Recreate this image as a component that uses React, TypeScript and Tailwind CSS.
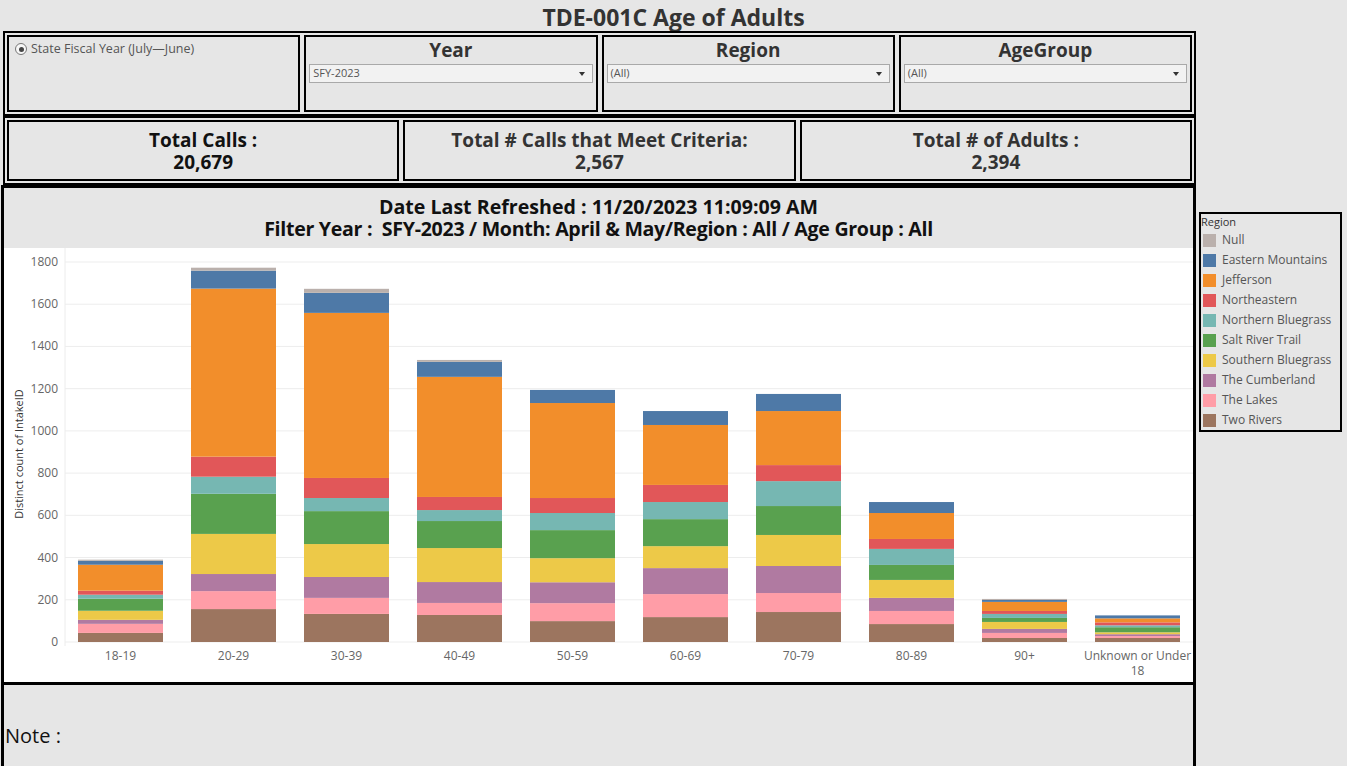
import React from 'react';

// Region legend order (top to bottom); bars stack in reverse order
const REGIONS = [
  { name: 'Null', color: '#bab0ac' },
  { name: 'Eastern Mountains', color: '#4e79a7' },
  { name: 'Jefferson', color: '#f28e2b' },
  { name: 'Northeastern', color: '#e15759' },
  { name: 'Northern Bluegrass', color: '#76b7b2' },
  { name: 'Salt River Trail', color: '#59a14f' },
  { name: 'Southern Bluegrass', color: '#edc948' },
  { name: 'The Cumberland', color: '#b07aa1' },
  { name: 'The Lakes', color: '#ff9da7' },
  { name: 'Two Rivers', color: '#9c755f' },
];

// counts per age group, bottom-up: Two Rivers .. Null
const AGE_GROUPS: { label: string[]; values: number[] }[] = [
  { label: ['18-19'], values: [43, 43, 19, 43, 57, 19, 19, 123, 19, 5] },
  { label: ['20-29'], values: [156, 85, 81, 190, 190, 81, 95, 796, 85, 14] },
  { label: ['30-39'], values: [133, 76, 99, 156, 156, 62, 95, 782, 95, 19] },
  { label: ['40-49'], values: [128, 57, 99, 161, 128, 52, 62, 569, 71, 9] },
  { label: ['50-59'], values: [99, 85, 99, 114, 133, 81, 71, 450, 62, 0] },
  { label: ['60-69'], values: [118, 109, 123, 104, 128, 81, 81, 284, 66, 0] },
  { label: ['70-79'], values: [142, 90, 128, 147, 137, 118, 76, 256, 81, 0] },
  { label: ['80-89'], values: [85, 62, 62, 85, 71, 76, 47, 123, 52, 0] },
  { label: ['90+'], values: [19, 24, 19, 33, 19, 19, 14, 43, 9, 5] },
  { label: ['Unknown or Under', '18'], values: [19, 9, 9, 9, 24, 9, 14, 19, 14, 0] },
];

const STACK_COLORS = [...REGIONS].reverse().map((r) => r.color);
const TICKS = [0, 200, 400, 600, 800, 1000, 1200, 1400, 1600, 1800];

const BASE_Y = 394;
const K = 380 / 1800;
const PLOT_X = 61;
const STEP = 113;
const BAR_W = 85;

function Dropdown({ value }: { value: string }) {
  return (
    <div className="mx-[3px] mt-[1px] flex h-[19px] items-center justify-between border border-[#a9a9a9] bg-[#f2f2f2] pl-[3px] pr-[7px] text-[11px] text-[#555]">
      <span>{value}</span>
      <svg width="6" height="4" viewBox="0 0 6 4">
        <path d="M0 0h6L3 4z" fill="#333" />
      </svg>
    </div>
  );
}

function FilterPanel({ title, value }: { title: string; value: string }) {
  return (
    <div className="border-2 border-black">
      <div className="h-[26px] text-center text-[19px] font-bold leading-[26px] text-[#333]">{title}</div>
      <Dropdown value={value} />
    </div>
  );
}

function Kpi({ title, value, dark }: { title: string; value: string; dark?: boolean }) {
  return (
    <div
      className={`flex flex-col items-center justify-center border-2 border-black text-[19px] font-bold leading-[22px] ${dark ? 'text-[#111]' : 'text-[#333]'}`}
    >
      <div>{title}</div>
      <div>{value}</div>
    </div>
  );
}

function Chart() {
  return (
    <svg width="1189" height="434" viewBox="0 0 1189 434" className="block">
      <line x1={PLOT_X} y1={0} x2={PLOT_X} y2={BASE_Y + 4} stroke="#ececec" />
      {TICKS.map((t) => {
        const y = BASE_Y - t * K;
        return (
          <g key={t}>
            <line x1={PLOT_X} y1={y} x2={1189} y2={y} stroke="#ededed" />
            <text x={54} y={y + 4} textAnchor="end" fontSize="12" fill="#666" fontFamily="Open Sans, sans-serif">
              {t}
            </text>
          </g>
        );
      })}
      <text
        transform="translate(19 206) rotate(-90)"
        textAnchor="middle"
        fontSize="11"
        fill="#333"
        fontFamily="Open Sans, sans-serif"
      >
        Distinct count of IntakeID
      </text>
      {AGE_GROUPS.map((g, i) => {
        const x = 74 + STEP * i;
        let cum = 0;
        return (
          <g key={g.label.join(' ')}>
            {g.values.map((v, j) => {
              const y = BASE_Y - (cum + v) * K;
              cum += v;
              if (!v) return null;
              return <rect key={j} x={x} y={y} width={BAR_W} height={v * K} fill={STACK_COLORS[j]} />;
            })}
            {g.label.map((l, li) => (
              <text
                key={l}
                x={x + BAR_W / 2}
                y={412 + li * 15}
                textAnchor="middle"
                fontSize="12"
                fill="#666"
                fontFamily="Open Sans, sans-serif"
              >
                {l}
              </text>
            ))}
          </g>
        );
      })}
    </svg>
  );
}

export default function App() {
  return (
    <div className="h-[766px] w-[1347px] overflow-hidden bg-[#e6e6e6] font-['Open_Sans',sans-serif]">
      <h1 className="h-[31px] pt-[2px] text-center text-[23px] font-bold leading-[30px] text-[#333]">
        TDE-001C Age of Adults
      </h1>

      <div className="flex">
        <main className="ml-[1px] w-[1195px]">
          {/* Filters */}
          <section className="ml-[2px] grid h-[85px] w-[1193px] grid-cols-4 gap-[4px] border-2 border-black p-[2px]">
            <div className="border-2 border-black">
              <div className="ml-[6px] mt-[3px] flex items-center gap-[4px] text-[12.5px] text-[#555]">
                <span className="flex h-[12px] w-[12px] items-center justify-center rounded-full border border-[#777] bg-[#f7f7f7]">
                  <span className="h-[5px] w-[5px] rounded-full bg-[#444]" />
                </span>
                <span>State Fiscal Year (July—June)</span>
              </div>
            </div>
            <FilterPanel title="Year" value="SFY-2023" />
            <FilterPanel title="Region" value="(All)" />
            <FilterPanel title="AgeGroup" value="(All)" />
          </section>

          {/* KPIs */}
          <section className="ml-[2px] grid h-[69px] w-[1193px] grid-cols-3 gap-[4px] border-2 border-black p-[2px]">
            <Kpi title="Total Calls :" value="20,679" dark />
            <Kpi title="Total # Calls that Meet Criteria:" value="2,567" />
            <Kpi title="Total # of Adults :" value="2,394" />
          </section>

          {/* Chart */}
          <section className="border-[3px] border-black">
            <div className="h-[60px] pt-[8px] text-center text-[19.6px] font-bold leading-[22px] text-[#111]">
              <div>Date Last Refreshed : 11/20/2023 11:09:09 AM</div>
              <div className="tracking-[-0.3px]">
                Filter Year :&nbsp; SFY-2023 / Month: April &amp; May/Region : All / Age Group : All
              </div>
            </div>
            <div className="bg-white">
              <Chart />
            </div>
          </section>

          {/* Note */}
          <section className="h-[90px] border-x-[3px] border-black pl-[1px] pt-[38px] text-[20px] leading-[26px] text-[#111]">
            Note :
          </section>
        </main>

        <aside className="ml-[3px] mt-[181px] h-[220px] w-[143px] border-2 border-black text-[#555]">
          <div className="h-[16px] text-[11px] leading-[16px] text-[#333]">Region</div>
          {REGIONS.map((r) => (
            <div key={r.name} className="flex h-[20px] items-center gap-[6px] pl-[2px] text-[12px]">
              <span className="h-[13px] w-[13px] shrink-0" style={{ backgroundColor: r.color }} />
              <span className="whitespace-nowrap">{r.name}</span>
            </div>
          ))}
        </aside>
      </div>
    </div>
  );
}
